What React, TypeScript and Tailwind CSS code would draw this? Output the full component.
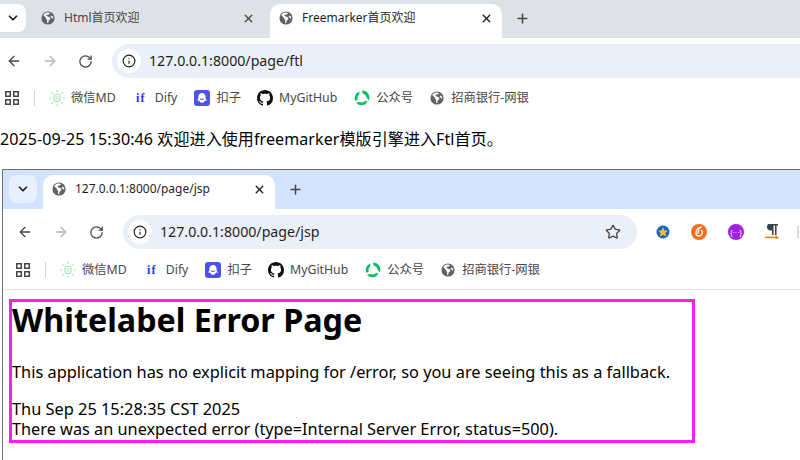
import { ArrowLeft, ArrowRight, ChevronDown, Info, Plus, RotateCw, Star, X } from "lucide-react";

const UI_FONT = "font-['Noto_Sans','Noto_Sans_CJK_SC',sans-serif]";

function Globe({ className = "w-[14px] h-[14px]" }: { className?: string }) {
    return (
        <svg className={className} viewBox="0 0 16 16">
            <circle cx="8" cy="8" r="7.5" fill="#5f6368" />
            <path fill="#fff" d="M7 1.6 C5 2 3.4 3 2.5 4.6 L5.6 7.6 L5.6 8.6 L7 10 L7 13.8 L8.4 13.8 L8.4 11.5 L10.6 9 L10.6 7.4 L7.6 6.4 L6 5.4 L7.4 4 L9.2 4 L10.2 2.2 C9.2 1.7 8 1.5 7 1.6 Z M12.2 5 L11 6.2 L13 8.6 L14 8.2 C14 7 13.4 5.8 12.2 5 Z" />
        </svg>
    );
}

function AppsIcon() {
    return (
        <svg className="w-[14px] h-[14px] shrink-0" viewBox="0 0 14 14" fill="none" stroke="#444746" strokeWidth="1.5">
            <rect x="0.75" y="0.75" width="4.5" height="4.5" />
            <rect x="8.75" y="0.75" width="4.5" height="4.5" />
            <rect x="0.75" y="8.75" width="4.5" height="4.5" />
            <rect x="8.75" y="8.75" width="4.5" height="4.5" />
        </svg>
    );
}

function WechatMdIcon() {
    return (
        <svg className="w-4 h-4" viewBox="0 0 16 16" fill="none">
            <rect x="5" y="4.5" width="6" height="7" rx="1.5" stroke="#a8e6b4" strokeWidth="1.2" />
            <path d="M6.5 7h3M6.5 9h3" stroke="#a8e6b4" />
            <circle cx="8" cy="1" r="0.9" fill="#b8ecc2" />
            <circle cx="8" cy="15" r="0.9" fill="#b8ecc2" />
            <circle cx="1" cy="8" r="0.9" fill="#b8ecc2" />
            <circle cx="15" cy="8" r="0.9" fill="#b8ecc2" />
            <circle cx="3" cy="3" r="0.9" fill="#b8ecc2" />
            <circle cx="13" cy="3" r="0.9" fill="#b8ecc2" />
            <circle cx="3" cy="13" r="0.9" fill="#b8ecc2" />
            <circle cx="13" cy="13" r="0.9" fill="#b8ecc2" />
        </svg>
    );
}

function CozeIcon() {
    return (
        <svg className="w-4 h-4" viewBox="0 0 16 16">
            <rect width="16" height="16" rx="3" fill="#4d53e8" />
            <path fill="#fff" d="M8 3 C5.6 3 4.4 4.8 4.4 7 L4.4 8.6 L3 10.4 L5 10.4 C5.6 12 6.8 12.8 8 12.8 C9.2 12.8 10.4 12 11 10.4 L13 10.4 L11.6 8.6 L11.6 7 C11.6 4.8 10.4 3 8 3 Z" />
            <path d="M6 8.6 C6.8 9.8 9.2 9.8 10 8.6" stroke="#4d53e8" strokeWidth="1" fill="none" />
        </svg>
    );
}

function GithubIcon() {
    return (
        <svg className="w-4 h-4" viewBox="0 0 16 16" fill="#111">
            <path d="M8 0C3.58 0 0 3.58 0 8c0 3.54 2.29 6.53 5.47 7.59.4.07.55-.17.55-.38 0-.19-.01-.82-.01-1.49-2.01.37-2.53-.49-2.69-.94-.09-.23-.48-.94-.82-1.13-.28-.15-.68-.52-.01-.53.63-.01 1.08.58 1.23.82.72 1.21 1.87.87 2.33.66.07-.52.28-.87.51-1.07-1.78-.2-3.64-.89-3.64-3.95 0-.87.31-1.59.82-2.15-.08-.2-.36-1.02.08-2.12 0 0 .67-.21 2.2.82.64-.18 1.32-.27 2-.27s1.36.09 2 .27c1.53-1.04 2.2-.82 2.2-.82.44 1.1.16 1.92.08 2.12.51.56.82 1.27.82 2.15 0 3.07-1.87 3.75-3.65 3.95.29.25.54.73.54 1.48 0 1.07-.01 1.93-.01 2.2 0 .21.15.46.55.38A8.01 8.01 0 0 0 16 8c0-4.42-3.58-8-8-8z" />
        </svg>
    );
}

function WechatMpIcon() {
    return (
        <svg className="w-4 h-4" viewBox="0 0 16 16" fill="#07c160">
            <path d="M8 .4 L11 .9 C13.6 2 15.3 4.4 15.4 7.2 L15 10.4 L12.4 7.4 C12.3 5.6 10.6 4 8.6 3.6 Z" />
            <path d="M13.4 11.2 L11.8 13.8 C9.4 15.6 6.2 15.8 3.8 14.2 L2 12.4 L5.8 12 C7.4 12.8 9.6 12.6 10.8 11 Z" />
            <path d="M1.2 11 C0.2 8.4 0.6 5.4 2.6 3.2 L5.6 1.4 L5 4.8 C3.6 6 3.2 7.8 3.8 9.4 Z" />
        </svg>
    );
}

function Bookmark({ icon, label, className }: { icon: React.ReactNode; label: string; className: string }) {
    return (
        <div className={`flex items-center shrink-0 ${className}`}>
            <span className="w-4 h-4 flex items-center justify-center shrink-0">{icon}</span>
            <span className="ml-[6px] text-[12.3px] leading-4 text-[#474747]">{label}</span>
        </div>
    );
}

function BookmarksBar({ className }: { className: string }) {
    return (
        <div className={`flex items-center ${className}`}>
            <AppsIcon />
            <div className="ml-[15px] w-px h-4 bg-[#c7d9f7]" />
            <Bookmark className="ml-[14px]" icon={<WechatMdIcon />} label="微信MD" />
            <Bookmark
                className="ml-[17px]"
                icon={<span className="text-[12px] font-bold leading-none tracking-[1px] text-[#1a3cf0] font-['Liberation_Serif',serif]">if</span>}
                label="Dify"
            />
            <Bookmark className="ml-[17px]" icon={<CozeIcon />} label="扣子" />
            <Bookmark className="ml-[16px]" icon={<GithubIcon />} label="MyGitHub" />
            <Bookmark className="ml-[17px]" icon={<WechatMpIcon />} label="公众号" />
            <Bookmark className="ml-[16px]" icon={<Globe />} label="招商银行-网银" />
        </div>
    );
}

function NavButtons({ className }: { className: string }) {
    return (
        <div className={`flex items-center gap-5 shrink-0 ${className}`}>
            <ArrowLeft className="w-4 h-4 text-[#474747]" strokeWidth={2} />
            <ArrowRight className="w-4 h-4 text-[#b4b6b8]" strokeWidth={2} />
            <RotateCw className="w-[15px] h-[15px] text-[#474747]" strokeWidth={2} />
        </div>
    );
}

function InfoChip() {
    return (
        <span className="w-[24px] h-[24px] ml-[5px] rounded-full bg-white flex items-center justify-center shrink-0">
            <Info className="w-[14px] h-[14px] text-[#1f1f1f]" strokeWidth={2} />
        </span>
    );
}

function ExtensionIcons() {
    return (
        <div className="flex items-center ml-[19px] gap-[21px] shrink-0">
            <svg className="w-[14px] h-[14px]" viewBox="0 0 14 14">
                <circle cx="7" cy="7" r="6.5" fill="#1565c0" />
                <path fill="#fbc02d" d="M7 2 8.4 5.4 12 5.7 9.3 8 10.1 11.6 7 9.7 3.9 11.6 4.7 8 2 5.7 5.6 5.4Z" />
            </svg>
            <svg className="w-4 h-4" viewBox="0 0 16 16">
                <circle cx="8" cy="8" r="8" fill="#f4701f" />
                <path d="M10.5 3 C7 4 4.5 6.5 5 10 C5.4 12.4 9 12.6 10.6 10.6 C11.8 9 11.4 7 10 6" fill="none" stroke="#fff" strokeWidth="1.4" />
                <path d="M8 5.4 L6.8 10" stroke="#fff" strokeWidth="1.2" />
            </svg>
            <div className="w-4 h-4 rounded-full bg-[#a020e8] flex items-center justify-center text-white text-[7px] leading-none font-['Liberation_Sans',sans-serif]">
                {"{···}"}
            </div>
            <svg className="w-[14px] h-4" viewBox="0 0 14 16">
                <path fill="#37474f" d="M3 0h10v1.6h-1.4V11H10V1.6H8.6V11H7V6.4H5.6C3.4 6.4 2 5 2 3.2 2 1.4 3 .4 3 0Z" />
                <path d="M0 13.4h12" stroke="#f57c00" strokeWidth="1.5" />
                <path d="M10.6 11.4 14 13.4l-3.4 2Z" fill="#f57c00" />
            </svg>
            <div className="w-[2px] h-3 bg-[#d8d8d8] ml-[-3px]" />
        </div>
    );
}

export default function App() {
    return (
        <div className={`w-[800px] h-[460px] overflow-hidden bg-white text-black ${UI_FONT}`}>
            {/* Outer window */}
            <div className="h-[38px] bg-[#dee1e6] flex items-end">
                <div className="w-[26px] h-[28px] mb-[6px] bg-white rounded-r-[8px] flex items-center justify-center shrink-0">
                    <ChevronDown className="w-[14px] h-[14px] text-[#1f1f1f]" strokeWidth={3} />
                </div>
                <div className="w-[232px] h-[34px] ml-[12px] flex items-center pl-[3px] pr-[15px] pb-[6px] shrink-0">
                    <Globe />
                    <span className="ml-[9px] text-[12px] text-[#474747]">Html首页欢迎</span>
                    <X className="w-[13px] h-[13px] ml-auto text-[#474747]" strokeWidth={2.6} />
                </div>
                <div className="w-[232px] h-[34px] bg-white rounded-t-[10px] flex items-center pl-[9px] pr-[9px] pb-[6px] shrink-0">
                    <Globe />
                    <span className="ml-[9px] text-[12px] text-[#1f1f1f]">Freemarker首页欢迎</span>
                    <X className="w-[13px] h-[13px] ml-auto text-[#1f1f1f]" strokeWidth={2.6} />
                </div>
                <Plus className="w-[15px] h-[15px] ml-[13px] mb-[12px] text-[#474747]" strokeWidth={2.4} />
            </div>
            <div className="h-[40px] flex items-center pt-[6px]">
                <NavButtons className="ml-[6px]" />
                <div className="h-[34px] ml-[19px] flex-1 bg-[#ebf0f8] rounded-l-full flex items-center">
                    <InfoChip />
                    <span className="ml-[8px] text-[14.2px] text-[#1f1f1f]">127.0.0.1:8000/page/ftl</span>
                </div>
            </div>
            <BookmarksBar className="h-[36px] pl-[5px] pt-[4px]" />
            <div className="h-[55px] pt-[13px] text-[16px] leading-[24px] tracking-[0.1px]">2025-09-25 15:30:46 欢迎进入使用freemarker模版引擎进入Ftl首页。</div>

            {/* Inner window */}
            <div className="ml-[2px] h-[291px] border-t border-l border-[#6b6e73]">
                <div className="h-[39px] bg-[#d3e3fd] flex items-end">
                    <div className="w-[28px] h-[28px] ml-[6px] mb-[6px] bg-[#e8f0fe] rounded-[8px] flex items-center justify-center shrink-0">
                        <ChevronDown className="w-[14px] h-[14px] text-[#1f1f1f]" strokeWidth={3} />
                    </div>
                    <div className="w-[232px] h-[34px] ml-[6px] bg-white rounded-t-[10px] flex items-center pl-[9px] pr-[9px] pb-[6px] shrink-0">
                        <Globe />
                        <span className="ml-[9px] text-[12px] text-[#1f1f1f]">127.0.0.1:8000/page/jsp</span>
                        <X className="w-[13px] h-[13px] ml-auto text-[#1f1f1f]" strokeWidth={2.6} />
                    </div>
                    <Plus className="w-[15px] h-[15px] ml-[13px] mb-[12px] text-[#474747]" strokeWidth={2.4} />
                </div>
                <div className="h-[41px] flex items-center pt-[5px]">
                    <NavButtons className="ml-[14px]" />
                    <div className="h-[34px] w-[514px] ml-[19px] bg-[#ebf0f8] rounded-full flex items-center shrink-0">
                        <InfoChip />
                        <span className="ml-[8px] text-[14.2px] text-[#1f1f1f]">127.0.0.1:8000/page/jsp</span>
                        <Star className="w-4 h-4 ml-auto mr-[16px] text-[#474747]" strokeWidth={2} />
                    </div>
                    <ExtensionIcons />
                </div>
                <BookmarksBar className="h-[40px] pl-[13px] border-b border-[#e3e3e3]" />
                <div className="w-[686px] h-[144px] mt-[9px] ml-[6px] border-[3px] border-[#f91ef9]">
                    <h1 className="text-[32.3px] font-bold leading-[38px] mt-[-2px]">Whitelabel Error Page</h1>
                    <p className="text-[16.35px] leading-[22px] mt-[23px]">This application has no explicit mapping for /error, so you are seeing this as a fallback.</p>
                    <div className="text-[16.35px] leading-[20px] mt-[16px]">Thu Sep 25 15:28:35 CST 2025</div>
                    <div className="text-[16.3px] leading-[20px]">There was an unexpected error (type=Internal Server Error, status=500).</div>
                </div>
            </div>
        </div>
    );
}
